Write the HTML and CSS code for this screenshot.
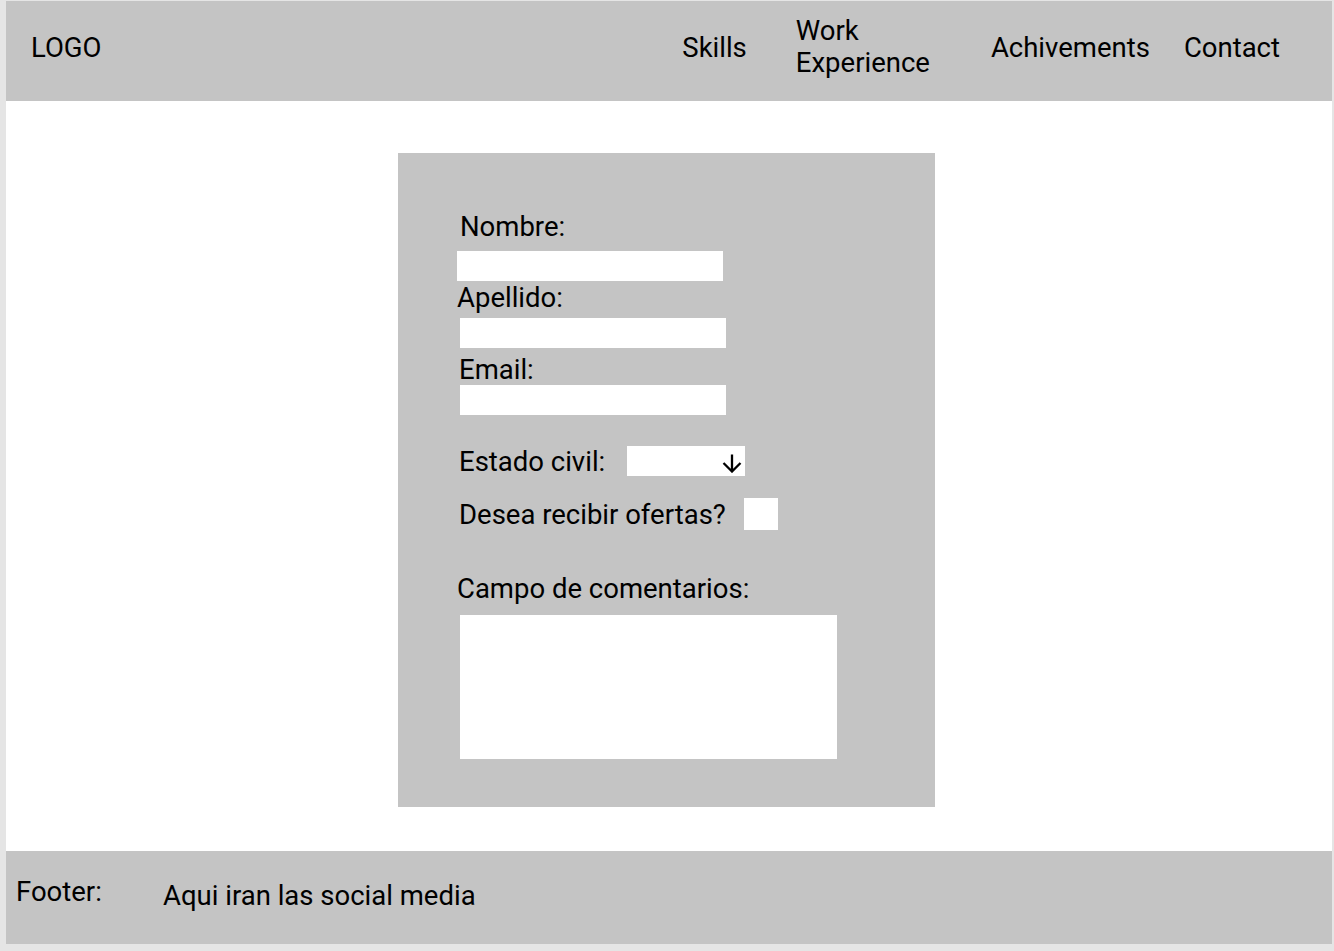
FILE: index.html
```html
<!DOCTYPE html>
<html lang="es">
<head>
<meta charset="utf-8">
<title>Contact</title>
<link rel="stylesheet" href="styles.css">
</head>
<body>
<div class="page">
  <header class="header">
    <div class="logo">LOGO</div>
    <nav class="nav">
      <a class="nav-item nav-skills">Skills</a>
      <a class="nav-item nav-work">Work<br>Experience</a>
      <a class="nav-item nav-achiv">Achivements</a>
      <a class="nav-item nav-contact">Contact</a>
    </nav>
  </header>
  <main class="main">
    <form class="panel">
      <label class="label label-nombre">Nombre:</label>
      <div class="field field-nombre"></div>
      <label class="label label-apellido">Apellido:</label>
      <div class="field field-apellido"></div>
      <label class="label label-email">Email:</label>
      <div class="field field-email"></div>
      <div class="row row-estado">
        <span class="label">Estado civil:</span>
        <div class="select">
          <svg class="arrow" width="22" height="19" viewBox="0 0 22 19"><path d="M11 0.5 V17.5 M2.5 9 L11 17.5 L19.5 9" fill="none" stroke="#000" stroke-width="2.3"/></svg>
        </div>
      </div>
      <div class="row row-ofertas">
        <span class="label">Desea recibir ofertas?</span>
        <div class="checkbox"></div>
      </div>
      <label class="label label-comentarios">Campo de comentarios:</label>
      <div class="textarea"></div>
    </form>
  </main>
  <footer class="footer">
    <span class="footer-title">Footer:</span>
    <span class="footer-text">Aqui iran las social media</span>
  </footer>
</div>
</body>
</html>
```
FILE: styles.css
```css
* { box-sizing: border-box; }
html, body { margin: 0; padding: 0; }
body {
  background: #e5e5e5;
  font-family: Roboto, "Liberation Sans", sans-serif;
  font-size: 27.5px;
  color: #000;
}
.page {
  margin: 1px 2px 0 6px;
  width: 1326px;
  height: 943px;
  background: #fff;
  display: flex;
  flex-direction: column;
}
.header {
  height: 100px;
  background: #c4c4c4;
  display: flex;
  align-items: center;
  padding: 0 52px 6px 25px;
  line-height: 32px;
}
.logo { flex: 1; }
.nav { display: flex; align-items: center; }
.nav-item { color: #000; text-decoration: none; }
.nav-work { line-height: 32px; margin-left: 49px; margin-bottom: 2px; }
.nav-achiv { margin-left: 61px; }
.nav-contact { margin-left: 34px; }
.main {
  flex: 1;
  padding: 52px 0 0 392px;
}
.panel {
  width: 537px;
  height: 654px;
  background: #c4c4c4;
  padding: 58px 0 0 59px;
  display: flex;
  flex-direction: column;
  align-items: flex-start;
}
.label { display: block; line-height: 32px; }
.label-nombre { margin-left: 3px; }
.field { width: 266px; height: 30px; background: #fff; }
.field-nombre { margin-top: 8px; }
.label-apellido { margin-top: 1px; }
.field-apellido { margin-top: 4px; margin-left: 3px; }
.label-email { margin-top: 6px; margin-left: 2px; }
.field-email { margin-top: -1px; margin-left: 3px; }
.row { display: flex; align-items: flex-start; margin-left: 2px; }
.row-estado { margin-top: 31px; }
.select {
  width: 118px;
  height: 30px;
  background: #fff;
  margin-left: 22px;
  display: flex;
  align-items: flex-start;
  justify-content: flex-end;
  padding: 8px 2px 0 0;
}
.row-ofertas { margin-top: 20px; }
.row-ofertas .label { margin-top: 1px; }
.checkbox { width: 34px; height: 32px; background: #fff; margin-left: 18px; }
.label-comentarios { margin-top: 42px; }
.textarea {
  width: 377px;
  height: 144px;
  background: #fff;
  margin-top: 10px;
  margin-left: 3px;
}
.footer {
  height: 93px;
  background: #c4c4c4;
  display: flex;
  align-items: flex-start;
  padding: 25px 0 0 10px;
  line-height: 32px;
}
.footer-title { width: 147px; }
.footer-text { margin-top: 4px; }
```
